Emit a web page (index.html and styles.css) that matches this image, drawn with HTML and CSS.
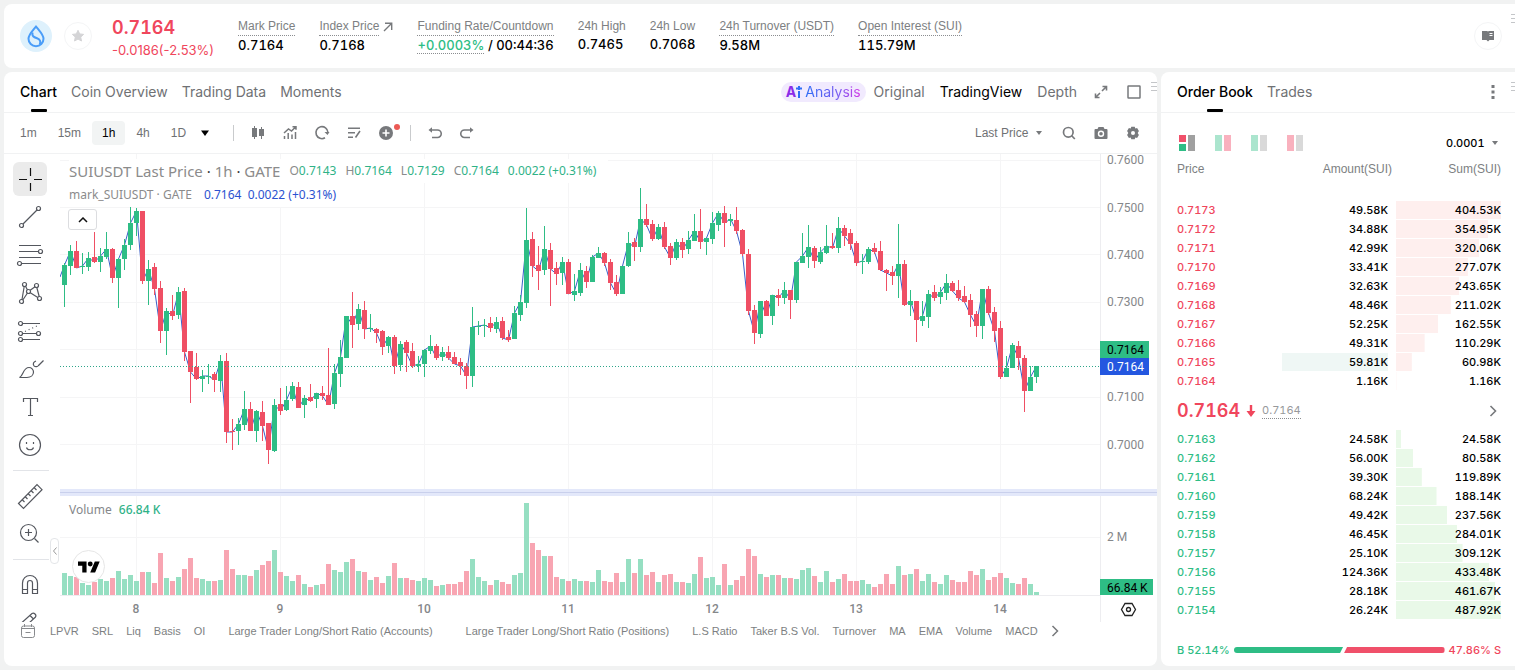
FILE: index.html
```html
<!DOCTYPE html>
<html lang="en">
<head>
<meta charset="utf-8">
<title>SUIUSDT Perpetual</title>
<link rel="stylesheet" href="styles.css">
</head>
<body>
<div class="app">
  <header class="card summary">
    <svg class="coin" width="32" height="32" viewBox="0 0 32 32" fill="none" stroke="#4a9df8" stroke-width="2"><circle cx="16" cy="16" r="16" fill="#def1fc" stroke="none"/><path d="M16 6.500C12 11.500 8.500 14.800 8.500 18.700a7.500 7.500 0 0 0 15 0C23.500 14.800 20 11.500 16 6.500z"/><path d="M12.600 12.500c-1 3.500 1 4.500 4.400 5.800 3 1.200 4 3 2.800 6"/></svg>
    <button class="round star" aria-label="Favourite"><svg width="14" height="14" viewBox="0 0 14 14"><path fill="#d4d4d6" stroke="#d4d4d6" stroke-linejoin="round" d="M7 1.300l1.700 3.600 3.900.5-2.900 2.700.8 3.900L7 10.100 3.500 12l.8-3.900L1.400 5.400l3.900-.5z"/></svg></button>
    <div class="last"><strong>0.7164</strong><span>-0.0186(-2.53%)</span></div>
    <dl class="stats">
      <div><dt><span class="dotted">Mark Price</span></dt><dd>0.7164</dd></div>
      <div><dt><span class="dotted">Index Price</span><svg width="10" height="10" viewBox="0 0 10 10" fill="none" stroke="#77797c" stroke-width="1.400"><path d="M1 9L8.500 1.500M2 1.300h6.700V8"/></svg></dt><dd>0.7168</dd></div>
      <div><dt><span class="dotted">Funding Rate/Countdown</span></dt><dd><span class="dotted up">+0.0003%</span> / 00:44:36</dd></div>
      <div><dt><span>24h High</span></dt><dd>0.7465</dd></div>
      <div><dt><span>24h Low</span></dt><dd>0.7068</dd></div>
      <div><dt><span class="dotted">24h Turnover (USDT)</span></dt><dd>9.58M</dd></div>
      <div><dt><span class="dotted">Open Interest (SUI)</span></dt><dd>115.79M</dd></div>
    </dl>
    <button class="round guide" aria-label="Guide"><svg width="12" height="12" viewBox="0 0 12 12"><path fill="#77797c" d="M0 1h5q1 0 1 1 0-1 1-1h5v9H7.500L6 11.500 4.500 10H0z"/><path stroke="#fff" d="M7.500 3.500h3M7.500 5.500h3"/></svg></button>
    <span class="grip"></span>
  </header>

  <main class="columns">
    <section class="card chart">
      <div class="tabbar">
        <nav class="tabs">
          <button class="active">Chart</button><button>Coin Overview</button><button>Trading Data</button><button>Moments</button>
        </nav>
        <div class="views">
          <button class="ai"><b>A</b><svg width="6" height="12" viewBox="0 0 6 12" fill="none" stroke="#2d6df6" stroke-width="2"><path d="M3 5v7M3 0v4M0 2.500h6" /></svg><span>Analysis</span></button>
          <button>Original</button><button class="on">TradingView</button><button>Depth</button>
        </div>
        <div class="window">
          <button aria-label="Expand"><svg width="14" height="14" viewBox="0 0 14 14" fill="none" stroke="#77797c" stroke-width="1.600"><path d="M8 6l4.500-4.500M8.500 1.500h4v4M6 8l-4.500 4.500M1.500 8.500v4h4"/></svg></button>
          <button aria-label="Layout"><svg width="14" height="14" viewBox="0 0 14 14" fill="none" stroke="#77797c" stroke-width="1.500"><rect x="1" y="1" width="12" height="12" rx=".5"/></svg></button>
        </div>
        <span class="grip"></span>
      </div>

      <div class="toolbar">
        <div class="intervals">
          <button>1m</button><button>15m</button><button class="active">1h</button><button>4h</button><button>1D</button>
          <button class="more" aria-label="More intervals"><svg width="8" height="6" viewBox="0 0 8 6"><path d="M0 .5h8L4 6z"/></svg></button>
        </div>
        <span class="sep"></span>
        <div class="icons">
          <button aria-label="Candles"><svg width="16" height="16" viewBox="0 0 16 16" fill="#77797c"><path d="M4 1h1v2h2v9H5v2H4v-2H2V3h2zM11 2h1v2h2v7h-2v3h-1v-3H9V4h2z"/></svg></button>
          <button aria-label="Indicators"><svg width="16" height="16" viewBox="0 0 16 16" fill="none" stroke="#77797c" stroke-width="1.500"><path d="M2 8l4.500-4 3 2L14 1.500M10.500 1.700h3.500v3M2.500 14v-3M6.200 14V8M10 14V9.500M13.500 14V7"/></svg></button>
          <button aria-label="Replay"><svg width="16" height="16" viewBox="0 0 16 16" fill="none" stroke="#77797c" stroke-width="1.600"><path d="M11 12.800a6 6 0 1 1 2.900-5.500"/><path d="M10.500 7h5L13.500 10z" fill="#77797c" stroke="none"/></svg></button>
          <button aria-label="Templates"><svg width="16" height="16" viewBox="0 0 16 16" fill="none" stroke="#77797c" stroke-width="1.600"><path d="M2 3.200h12M2 7.700h7M2 12.200h5M14 6l-4.500 6.500"/></svg></button>
          <button class="add" aria-label="Add"><svg width="16" height="16" viewBox="0 0 16 16"><circle cx="8" cy="8" r="7" fill="#77797c"/><path d="M8 4.500v7M4.500 8h7" stroke="#fff" stroke-width="1.600"/></svg></button>
        </div>
        <span class="sep"></span>
        <div class="icons undo">
          <button aria-label="Undo"><svg width="16" height="16" viewBox="0 0 16 16" fill="none" stroke="#77797c" stroke-width="1.600"><path d="M3 5h7.500a3.500 3.500 0 0 1 0 7.500H5"/><path d="M1.500 5L5 2.300v5.400z" fill="#77797c" stroke="none"/></svg></button>
          <button aria-label="Redo"><svg width="16" height="16" viewBox="0 0 16 16" fill="none" stroke="#77797c" stroke-width="1.600"><path d="M13 5H5.500a3.500 3.500 0 0 0 0 7.500H11"/><path d="M14.500 5L11 2.300v5.400z" fill="#77797c" stroke="none"/></svg></button>
        </div>
        <div class="right">
          <label class="pick"><select aria-label="Price type"><option>Last Price</option></select><svg width="6" height="4" viewBox="0 0 6 4"><path fill="#77797c" d="M0 0h6L3 4z"/></svg></label>
          <button aria-label="Search"><svg width="14" height="14" viewBox="0 0 14 14" fill="none" stroke="#77797c" stroke-width="1.700"><circle cx="6.300" cy="6.300" r="4.800"/><path d="M9.500 9.500l3.300 3.500"/></svg></button>
          <button aria-label="Snapshot"><svg width="14" height="14" viewBox="0 0 14 14"><path fill="#77797c" d="M4.500 1h5l1 2H12.500q1 0 1 1v8q0 1-1 1h-11q-1 0-1-1V4q0-1 1-1H3.500z"/><circle cx="7" cy="7.700" r="2.500" fill="none" stroke="#fff" stroke-width="1.400"/></svg></button>
          <button aria-label="Settings"><svg width="14" height="14" viewBox="0 0 14 14"><path fill="#77797c" d="M5.300.7h3.400l.6 1.700 1.800-.3 1.800 3-1.200 1.900 1.200 1.900-1.800 3-1.800-.3-.6 1.700H5.300l-.6-1.700-1.800.3-1.800-3L2.300 7 1.100 5.100l1.800-3 1.800.3z"/><circle cx="7" cy="7" r="2" fill="#fff"/></svg></button>
        </div>
      </div>

      <div class="board">
        <div class="tools">
          <button class="active" aria-label="Cross"><svg viewBox="0 0 34 34"><path d="M17.500 6v8M17.500 21v8M6 17.500h8M21 17.500h8" stroke="#111"/></svg></button>
          <button aria-label="Trend line"><svg viewBox="0 0 34 34"><circle cx="8.500" cy="25.500" r="2"/><circle cx="25.500" cy="8.500" r="2"/><path d="M10 24L24 10"/></svg></button>
          <button aria-label="Fibonacci"><svg viewBox="0 0 34 34"><path d="M6 7.500h22M6 13.500h19.500M6 19.500h22M8.500 25.500H28"/><circle cx="27.500" cy="13.500" r="2"/><circle cx="6.500" cy="25.500" r="2"/></svg></button>
          <button aria-label="Patterns"><svg viewBox="0 0 34 34"><path d="M11.200 10.500L9 23.500M12.500 10.200l2 3.800M17.200 14.200l4.800-3.500M23.800 11.500l2.400 9M9.800 24l4.700-7M17.300 16.700l7.500 4.800"/><circle cx="11.500" cy="8.500" r="2"/><circle cx="23.500" cy="9.500" r="2"/><circle cx="15.500" cy="15.500" r="2"/><circle cx="8.500" cy="25.500" r="2"/><circle cx="26.500" cy="22.500" r="2"/></svg></button>
          <button aria-label="Forecast"><svg viewBox="0 0 34 34"><path d="M9.500 9.500H27M9.500 19.500h14M9.500 25.500H27"/><path d="M12 17.500L26 11" stroke-dasharray="1 3"/><circle cx="7.500" cy="9.500" r="2"/><circle cx="7.500" cy="19.500" r="2"/><circle cx="25.500" cy="19.500" r="2"/><circle cx="7.500" cy="25.500" r="2"/></svg></button>
          <button aria-label="Brush"><svg viewBox="0 0 34 34"><path d="M6.500 25.500c4-2 3.500-10 9.500-10a4.500 4.500 0 0 1 4.500 4.500c0 3-2.500 5.500-6.500 5.500zM23 9c-2.500 1-3.500 3-2 4.800 1.500 1.500 3.500 1 4.500-.3L30.500 8.500"/></svg></button>
          <button aria-label="Text"><svg viewBox="0 0 34 34"><path d="M10.500 12V8.500h14V12M17.500 8.500v17M15 25.500h5"/></svg></button>
          <button aria-label="Emoji"><svg viewBox="0 0 34 34"><circle cx="17" cy="17" r="10.500"/><path d="M13.500 19.500c1 3 6 3 7 0M13.500 14v2M20.500 14v2"/></svg></button>
          <hr>
          <button aria-label="Measure"><svg viewBox="0 0 34 34"><path d="M5.500 24.500L24 5.700l5 5L10.500 29.500zM9.500 21l2 2M12.500 18l2 2M15.500 15l2 2M18.500 12l2 2M21.500 9l2 2"/></svg></button>
          <button aria-label="Zoom in"><svg viewBox="0 0 34 34"><circle cx="15.500" cy="15.500" r="8"/><path d="M21.500 21.500l4 4M15.500 12v7M12 15.500h7"/></svg></button>
          <hr>
          <button aria-label="Magnet"><svg viewBox="0 0 34 34"><path d="M9.500 25.500V15a7.500 7.500 0 0 1 15 0v10.500h-5V15a2.500 2.500 0 0 0-5 0v10.500zM9.500 21.500h5M19.500 21.500h5"/></svg></button>
          <button aria-label="Draw mode"><svg viewBox="0 0 34 34"><path d="M9 16.500L19 7.500q1.500-1 3 .5t.5 3L15 18M17 9.500l3.500 3.500"/></svg></button>
        </div>

        <div class="plot">
          <svg id="plot" width="100%" height="468"></svg>
          <div class="legend">
            <div class="line big"><span>SUIUSDT Last Price <i>·</i> 1h <i>·</i> GATE</span><span class="vals">O<em>0.7143</em></span><span class="vals">H<em>0.7164</em></span><span class="vals">L<em>0.7129</em></span><span class="vals">C<em>0.7164</em></span><span class="vals"><em>0.0022 (+0.31%)</em></span></div>
            <div class="line"><span>mark_SUIUSDT · GATE</span><span class="blue">0.7164&nbsp; 0.0022 (+0.31%)</span></div>
            <button class="fold" aria-label="Collapse legend"><svg width="10" height="6" viewBox="0 0 10 6" fill="none" stroke="#111" stroke-width="1.500"><path d="M1 5l4-4 4 4"/></svg></button>
          </div>
          <div class="vol">Volume <em>66.84 K</em></div>
          <a class="tv" href="#" aria-label="TradingView"><svg width="22" height="12" viewBox="0 4 36 18"><path d="M14 22H7V11H0V4h14v18zM28 22h-8l7.500-18h8L28 22z"/><circle cx="20" cy="8" r="4"/></svg></a>
          <button class="drawer" aria-label="Hide tools"><svg width="4" height="8" viewBox="0 0 4 8" fill="none" stroke="#999"><path d="M3.500.5L.5 4l3 3.500"/></svg></button>
        </div>
        <svg id="axis" width="57" height="468"></svg>
      </div>

      <div class="indicators">
        <button class="cal" aria-label="Go to date"><svg width="16" height="16" viewBox="0 0 16 16" fill="none" stroke="#888a8d"><rect x="1.500" y="3" width="13" height="11.500" rx="2"/><path d="M4.500 1v3M11.500 1v3M5.500 9.500h5M1.500 5.500h13"/></svg></button>
        <div class="list"><button>LPVR</button><button>SRL</button><button>Liq</button><button>Basis</button><button>OI</button><button class="wide">Large Trader Long/Short Ratio (Accounts)</button><button class="wide">Large Trader Long/Short Ratio (Positions)</button><button>L.S Ratio</button><button>Taker B.S Vol.</button><button>Turnover</button><button>MA</button><button>EMA</button><button>Volume</button><button>MACD</button></div>
        <button class="next" aria-label="More indicators"><svg width="8" height="12" viewBox="0 0 8 12" fill="none" stroke="#77797c" stroke-width="1.500"><path d="M1.500 1l5 5-5 5"/></svg></button>
      </div>
    </section>

    <section class="card book">
      <div class="tabbar">
        <nav class="tabs"><button class="active">Order Book</button><button>Trades</button></nav>
        <button class="kebab" aria-label="Options"><svg width="4" height="14" viewBox="0 0 4 14" fill="#77797c"><path d="M.5 0h3v3h-3zM.5 5.500h3v3h-3zM.5 11h3v3h-3z"/></svg></button>
        <span class="grip"></span>
      </div>
      <div class="modes">
        <button aria-label="Default view"><svg width="16" height="16" viewBox="0 0 16 16"><path fill="#f0506a" d="M0 0h7v7H0z"/><path fill="#2ebd85" d="M0 9h7v7H0z"/><path fill="#a0a0a0" d="M9 0h7v16H9z"/></svg></button>
        <button aria-label="Split view"><svg width="16" height="16" viewBox="0 0 16 16"><path fill="#abe5ce" d="M0 0h7v16H0z"/><path fill="#f9b1be" d="M9 0h7v16H9z"/></svg></button>
        <button aria-label="Bids"><svg width="16" height="16" viewBox="0 0 16 16"><path fill="#abe5ce" d="M0 0h7v16H0z"/><path fill="#d9d9d9" d="M9 0h7v16H9z"/></svg></button>
        <button aria-label="Asks"><svg width="16" height="16" viewBox="0 0 16 16"><path fill="#f9b1be" d="M0 0h7v16H0z"/><path fill="#d9d9d9" d="M9 0h7v16H9z"/></svg></button>
        <label class="pick"><select aria-label="Precision"><option>0.0001</option></select><svg width="6" height="4" viewBox="0 0 6 4"><path fill="#77797c" d="M0 0h6L3 4z"/></svg></label>
      </div>
      <table class="asks">
        <thead><tr><th>Price</th><th>Amount(SUI)</th><th>Sum(SUI)</th></tr></thead>
        <tbody id="asks"></tbody>
      </table>
      <div class="mid"><strong>0.7164</strong><svg width="10" height="12" viewBox="0 0 10 12" fill="#f0465c"><path d="M3.800 0h2.400v6H9.500L5 12 .5 6h3.300z"/></svg><span class="dotted">0.7164</span><button aria-label="More"><svg width="8" height="12" viewBox="0 0 8 12" fill="none" stroke="#77797c" stroke-width="1.600"><path d="M1.500 1l5 5-5 5"/></svg></button></div>
      <table class="bids"><tbody id="bids"></tbody></table>
      <div class="ratio"><span class="up">B 52.14%</span><div class="bar"><div class="buy"></div><div class="sell"></div></div><span class="down">47.86% S</span></div>
    </section>
  </main>
</div>
<script src="app.js"></script>
</body>
</html>
```

FILE: styles.css
```css
* { box-sizing: border-box; }
body { margin: 0; background: #f1f2f2; color: #000; font: 500 12px/16px Inter, "Liberation Sans", sans-serif; font-variant-numeric: tabular-nums; }
button, select { border: 0; margin: 0; padding: 0; background: none; font: inherit; font-variant-numeric: inherit; color: inherit; appearance: none; white-space: nowrap; }
button { display: flex; align-items: center; justify-content: center; }
svg { display: block; flex: none; }
em, i { font-style: normal; }
.app { display: flex; flex-direction: column; gap: 4px; min-height: 100vh; padding: 4px 0 4px 4px; overflow: hidden; }
.card { background: #fff; border-radius: 8px; min-width: 0; }
.up { color: #2ebd85; }
.down { color: #f0465c; }
.dotted { border-bottom: 1px dotted #8b8d90; }
.grip { position: absolute; right: 0; top: 10px; width: 6px; height: 10px; background: repeating-linear-gradient(#c4c6c9 0 1px, transparent 1px 4px); }

.summary { position: relative; display: flex; align-items: center; height: 64px; padding-left: 16px; border-radius: 8px 0 0 8px; }
.summary .grip { width: 4px; }
.round { width: 28px; height: 28px; border: 1px solid #f4f5f6; border-radius: 50%; }
.star { margin: 0 20px 0 12px; }
.guide { margin: 0 13px 0 auto; }
.last { display: flex; flex-direction: column; padding-top: 4px; margin-right: 24px; color: #f0465c; font-size: 13px; line-height: 20px; font-weight: 400; font-variant-numeric: normal; }
.last strong { font-size: 18px; line-height: 24px; font-weight: 600; font-variant-numeric: tabular-nums; }
.stats { display: flex; gap: 24px; margin: 0; white-space: nowrap; }
.stats dt { display: flex; align-items: center; gap: 4px; color: #7d7f82; font: 400 12px/17px "Liberation Sans", sans-serif; }
.stats dd { margin: 0; font-size: 13px; line-height: 18px; }

.columns { display: flex; flex: 1; gap: 4px; }
.chart { flex: 1; display: flex; flex-direction: column; }
.book { flex: 0 0 354px; border-radius: 8px 0 0 8px; }
.tabbar { position: relative; display: flex; align-items: center; height: 41px; padding: 0 16px; border-bottom: 1px solid #f1f2f3; font-size: 14px; font-weight: 400; color: #6f7174; }
.book .grip { width: 4px; }
.tabs { display: flex; gap: 14px; align-self: stretch; }
.tabs button { position: relative; }
.tabs .active { color: #000; font-weight: 500; }
.views .on { color: #000; }
.tabs .active::after { content: ""; position: absolute; left: 50%; bottom: 0; width: 16px; height: 3px; margin-left: -8px; background: #000; border-radius: 1px; }
.views { display: flex; align-items: center; gap: 15px; margin-left: auto; }
.ai { height: 20px; padding: 0 5px; margin-right: -7px; border-radius: 10px; background: #f1eafe; }
.ai b { color: #8b2be8; font-weight: 700; }
.ai span { margin-left: 3px; background: linear-gradient(90deg, #2d6df6, #7a5cf0 60%, #d63ae6); background-clip: text; color: transparent; }
.window { display: flex; gap: 19px; margin: 0 0 0 17px; }

.toolbar { display: flex; align-items: center; height: 41px; padding-left: 6px; border-bottom: 1px solid #f1f2f3; color: #6f7174; font-family: "Liberation Sans", sans-serif; font-weight: 400; }
.intervals { display: flex; gap: 1px; }
.intervals button { height: 24px; padding: 0 10px; border-radius: 4px; }
.intervals .active { background: #f2f4f4; color: #000; }
.intervals .more { padding: 0 4px; fill: #000; }
.sep { width: 1px; height: 16px; margin-left: 20px; background: #c9cbcd; }
.icons { display: flex; gap: 16px; margin-left: 16px; }
.icons + .sep { margin-left: 16px; }
.add { position: relative; }
.add::after { content: ""; position: absolute; right: -6px; top: -1px; width: 6px; height: 6px; border-radius: 50%; background: #ec5a55; }
.right { display: flex; align-items: center; gap: 18px; margin: 0 17px 0 auto; }
.pick { display: flex; align-items: center; gap: 7px; }
.pick + button { margin-left: 2px; }

.board { position: relative; display: flex; }
.tools { display: flex; flex-direction: column; gap: 4px; flex: 0 0 56px; max-height: 468px; padding: 8px 0 0 9px; overflow: hidden; }
.tools button { flex: none; width: 34px; height: 34px; border-radius: 6px; }
.tools .active { background: #ebebeb; }
.tools svg { width: 34px; height: 34px; fill: none; stroke: #54575e; stroke-width: 1.2; }
.tools hr { flex: none; width: 36px; height: 1px; margin: 4px 0; border: 0; background: #e2e4e8; }
.plot { position: relative; flex: 1; min-width: 0; }
.legend { position: absolute; left: 9px; top: 5px; color: #8b8b8b; font: 400 12px/24px "Noto Sans", sans-serif; white-space: nowrap; }
.legend .line { display: flex; gap: 12px; width: fit-content; padding-right: 12px; background: #fff; }
.legend .big { gap: 9px; font-size: 15px; }
.legend .big i { color: #333; }
.legend .vals { font-size: 12px; }
.legend em, .vol em { color: #2fb287; }
.blue { color: #2b52d0; }
.fold { width: 29px; height: 21px; margin: 2px 0 0 -1px; border: 1px solid #dcdde0; border-radius: 3px; background: #fff; }
.vol { position: absolute; left: 9px; top: 346px; color: #85878a; font: 400 12px/20px "Noto Sans", sans-serif; }
.vol em { margin-left: 4px; font-weight: 500; }
.tv { position: absolute; left: 12px; top: 396px; display: flex; align-items: center; justify-content: center; width: 33px; height: 33px; border: 1px solid #e6e6e6; border-radius: 50%; background: #fff; fill: #000; }
.drawer { position: absolute; left: -10px; top: 384px; width: 9px; height: 26px; border: 1px solid #e4e6e9; border-radius: 4px; background: #fff; }
#axis text, #plot text { font: 400 12px Roboto, sans-serif; fill: #85878a; }
#plot text { font-weight: 500; text-anchor: middle; }
#axis .tag { fill: #fff; }
#axis .dark { fill: #000; }

.indicators { display: flex; align-items: center; height: 18px; padding: 0 98px 0 16px; color: #7d7f82; font: 400 11px/16px "Liberation Sans", sans-serif; }
.list { display: flex; flex: 1; gap: 13px; margin-left: 14px; overflow: hidden; min-width: 0; }
.list .wide { padding: 0 10px; }
.next { margin-left: 8px; }

.kebab { margin: 0 4px 0 auto; }
.modes { display: flex; align-items: center; gap: 20px; padding: 22px 17px 0 18px; font-size: 11px; }
.modes .pick { margin-left: auto; }
table { width: calc(100% - 30px); margin: 0 14px 0 16px; border-collapse: collapse; table-layout: fixed; font-size: 11px; }
th, td { padding: 0; text-align: right; }
th:first-child, td:first-child { width: 70px; text-align: left; }
th:last-child, td:last-child { width: 105px; }
th { height: 49px; padding-top: 10px; vertical-align: top; color: #7d7f82; font: 400 12px/16px "Liberation Sans", sans-serif; }
th:nth-child(2) { padding-right: 4px; }
td { height: 19px; }
td:nth-child(2) { padding-right: 8px; }
td span { display: block; line-height: 18px; background-repeat: no-repeat; }
.asks td:first-child { color: #f0465c; }
.bids td:first-child { color: #2ebd85; }
.asks .depth { background-image: linear-gradient(#feefee, #feefee); }
.bids .depth { background-image: linear-gradient(#e9f9e8, #e9f9e8); }
.hit { margin-left: 35px; background: #eff7f5; }
.mid { display: flex; align-items: center; height: 39px; padding: 2px 18px 0 16px; color: #f0465c; }
.mid strong { font-size: 18px; line-height: 24px; font-weight: 600; }
.mid svg { margin: 0 6px; }
.mid .dotted { color: #97999c; font-size: 11px; font-weight: 400; }
.mid button { margin-left: auto; }
.mid button svg { margin: 0; }
.ratio { display: flex; align-items: center; gap: 4px; padding: 23px 14px 7px 16px; font-size: 11px; }
.bar { display: flex; flex: 1; gap: 1px; height: 6px; }
.buy { flex: 52.14; background: #2ebd85; border-radius: 3px 0 0 3px; clip-path: polygon(0 0, 100% 0, calc(100% - 3px) 100%, 0 100%); }
.sell { flex: 47.86; background: #f0506a; border-radius: 0 3px 3px 0; clip-path: polygon(3px 0, 100% 0, 100% 100%, 0 100%); }
```

FILE: app.js
```js
// Each candle: direction, high, body top, body bottom, low, volume (thirds of a pixel).
const candles = `g 250 255 315 380 66;g 195 213 258 285 57;r 183 213 264 264 55;g 220 259 262 282 36;g 216 234 261 272 30;r 156 231 246 249 40;g 205 228 246 276 48;g 156 207 231 236 42;r 204 207 294 308 51;g 234 237 294 384 71;g 178 195 237 270 48;g 75 128 195 209 60;g 84 93 128 167 42;r 93 93 303 312 70;g 240 267 303 375 70;r 249 261 327 345 36;r 303 324 453 488 126;g 384 392 453 525 51;r 345 393 408 420 42;g 321 336 405 417 54;r 324 333 516 543 78;r 513 513 576 669 111;r 519 561 597 600 51;g 570 588 597 636 48;g 552 588 591 612 42;r 576 582 600 636 42;g 525 543 603 636 45;r 519 543 756 789 135;r 717 753 756 810 78;g 714 732 753 795 60;g 633 687 735 750 60;r 666 687 753 753 57;g 690 693 753 786 75;r 663 696 738 783 90;r 729 729 810 852 102;g 657 675 813 816 135;r 624 672 693 705 70;g 618 660 690 693 57;g 606 618 657 663 42;r 606 621 684 684 60;g 645 654 675 714 33;r 612 651 663 666 24;g 639 639 657 684 30;r 618 639 648 660 33;r 504 645 675 675 93;g 552 579 672 687 75;g 480 531 582 621 70;g 408 408 534 534 99;r 336 408 435 504 108;g 372 387 432 450 72;r 363 390 447 477 70;g 402 443 446 456 45;r 444 447 459 489 54;r 450 453 501 525 36;g 468 471 498 519 57;r 465 471 558 582 96;g 483 492 555 573 51;r 480 486 519 576 51;r 489 513 558 563 45;g 528 552 558 576 42;g 507 510 552 591 51;g 465 498 513 522 45;r 492 498 534 540 27;g 501 516 531 543 30;r 498 516 534 540 33;r 516 531 552 552 34;r 534 546 558 585 39;r 549 558 588 627 72;g 381 441 588 621 108;g 423 438 441 465 54;g 417 435 438 471 42;r 411 429 444 456 30;g 411 426 447 459 45;r 411 423 474 480 39;r 450 471 480 486 33;g 378 399 477 477 60;g 345 366 405 423 66;g 84 180 369 384 276;r 156 177 258 291 157;r 198 255 273 330 135;g 138 207 270 285 117;r 189 210 267 378 117;r 246 264 282 315 54;g 231 246 279 315 48;r 237 246 342 342 42;g 282 333 345 363 48;g 249 270 339 348 42;r 258 273 306 324 42;g 225 231 306 306 39;g 201 219 234 234 75;r 216 219 249 258 42;r 237 246 309 330 39;r 285 306 342 348 66;g 258 258 342 342 39;g 156 189 258 261 108;r 174 186 201 243 66;g 24 117 201 216 108;r 72 117 135 141 60;r 120 132 177 183 70;g 132 141 177 180 39;r 126 141 201 207 60;r 189 198 234 255 63;g 177 186 234 240 39;r 174 186 210 234 39;g 153 180 207 222 36;g 102 153 183 183 63;r 87 153 186 207 114;g 174 174 186 225 51;g 96 129 177 192 54;g 93 99 135 153 30;r 78 99 129 201 93;g 102 117 123 138 30;r 81 120 153 162 45;r 147 150 222 228 57;r 207 222 393 405 138;r 375 390 459 492 117;g 363 363 462 474 63;r 360 363 408 408 54;g 345 345 408 435 60;r 327 345 354 378 60;g 306 330 354 372 51;r 330 330 360 417 51;g 246 246 360 369 48;g 159 228 249 249 75;g 135 201 231 264 82;r 198 204 243 264 57;g 201 216 246 252 39;g 135 198 219 222 72;r 159 198 204 207 39;g 111 144 204 219 48;r 135 144 168 198 63;r 147 159 192 210 42;r 183 189 249 258 42;g 222 243 246 282 45;g 201 207 246 252 34;r 189 204 216 222 24;r 183 213 270 273 34;r 267 270 279 333 62;r 258 276 288 315 34;g 132 252 288 354 87;r 240 252 375 378 61;g 330 363 375 408 63;r 363 363 420 486 78;g 363 408 423 438 42;g 330 342 411 444 63;r 315 336 354 363 39;g 321 336 351 372 33;g 282 309 339 360 59;r 303 309 333 336 45;r 300 330 354 363 39;r 318 348 366 369 39;r 342 360 405 441 72;r 393 402 438 471 59;g 327 327 438 477 78;r 318 327 399 405 45;r 381 396 453 486 54;r 423 444 591 597 66;g 528 564 591 591 51;g 489 495 564 564 36;r 483 498 534 570 33;r 525 534 633 696 51;g 558 591 633 633 33;g 558 558 591 609 9`
  .split(';').map(row => row.split(' '));

const colors = { g: '#2ebd85', r: '#ef4f64' };
const faded = { g: '#96dfc2', r: '#f8a5b2' };
const rect = (x, y, w, h, fill) => `<rect x="${x}" y="${y}" width="${w}" height="${h}" fill="${fill}"/>`;
const third = v => Math.round(v / 3);
const priceY = v => 26 + third(v);
const gridRows = [6, 53, 100, 148, 195, 243, 290, 383];

let plot = '';
gridRows.forEach(y => plot += rect(0, y, '100%', 1, '#f5f5f6'));
for (let d = 0; d < 7; d++) {
  const x = 76 + 144 * d;
  plot += rect(x, 0, 1, 441, '#f5f5f6') + `<text x="${x}" y="459">${8 + d}</text>`;
}
plot += rect(0, 335, '100%', 7, '#e3e8fa') + rect(0, 338, '100%', 1, '#c9d0ec');
plot += rect(0, 441, '100%', 1, '#ededf0');

const closes = candles.map((c, i) => `${4.5 + 6 * i},${priceY(c[0] === 'g' ? c[2] : c[3])}`);
plot += `<polyline points="0,123 ${closes.join(' ')}" fill="none" stroke="#3a5fc8"/>`;
candles.forEach(([dir, high, top, bottom, low, volume], i) => {
  const x = 2 + 6 * i;
  plot += rect(x + 2, priceY(high), 1, priceY(low) - priceY(high), colors[dir]);
  plot += rect(x, priceY(top), 5, Math.max(1, priceY(bottom) - priceY(top)), colors[dir]);
  plot += rect(x, 441 - third(volume), 5, third(volume), faded[dir]);
});
plot += '<line x1="0" x2="100%" y1="212.500" y2="212.500" stroke="#2ea58a" stroke-dasharray="1 2"/>';
document.getElementById('plot').innerHTML = plot;

let axis = rect(0, 0, 1, 468, '#ededf0') + rect(0, 335, 57, 7, '#e3e8fa') + rect(0, 338, 57, 1, '#c9d0ec');
[['0.7600', 10], ['0.7500', 58], ['0.7400', 105], ['0.7300', 152], ['0.7100', 247], ['0.7000', 295], ['2 M', 387]]
  .forEach(([label, y]) => axis += `<text x="7" y="${y}">${label}</text>`);
axis += rect(0, 187, 49, 17, '#2ebd85') + '<text class="dark" x="7" y="200">0.7164</text>';
axis += rect(0, 204, 49, 17, '#2457e0') + '<text class="tag" x="7" y="217">0.7164</text>';
axis += rect(0, 425, 53, 16, '#2ebd85') + '<text class="dark" x="7" y="438">66.84 K</text>';
axis += '<path d="M25 449.500h7l3.500 6-3.500 6h-7l-3.500-6z" fill="none" stroke="#222" stroke-width="1.300"/><circle cx="28.500" cy="455.500" r="2" fill="none" stroke="#222" stroke-width="1.300"/>';
document.getElementById('axis').innerHTML = axis;

const asks = [['0.7173', '49.58', 404.53], ['0.7172', '34.88', 354.95], ['0.7171', '42.99', 320.06], ['0.7170', '33.41', 277.07], ['0.7169', '32.63', 243.65], ['0.7168', '48.46', 211.02], ['0.7167', '52.25', 162.55], ['0.7166', '49.31', 110.29], ['0.7165', '59.81', 60.98], ['0.7164', '1.16', 1.16]];
const bids = [['0.7163', '24.58', 24.58], ['0.7162', '56.00', 80.58], ['0.7161', '39.30', 119.89], ['0.7160', '68.24', 188.14], ['0.7159', '49.42', 237.56], ['0.7158', '46.45', 284.01], ['0.7157', '25.10', 309.12], ['0.7156', '124.36', 433.48], ['0.7155', '28.18', 461.67], ['0.7154', '26.24', 487.92]];
const fill = (id, rows, max) => {
  document.getElementById(id).innerHTML = rows.map(([price, amount, sum]) =>
    `<tr><td>${price}</td><td><span class="${price === '0.7165' ? 'hit' : ''}">${amount}K</span></td>` +
    `<td><span class="depth" style="background-size:${(sum / max * 100).toFixed(1)}% 100%">${sum.toFixed(2)}K</span></td></tr>`).join('');
};
fill('asks', asks, 404.53);
fill('bids', bids, 487.92);
```
